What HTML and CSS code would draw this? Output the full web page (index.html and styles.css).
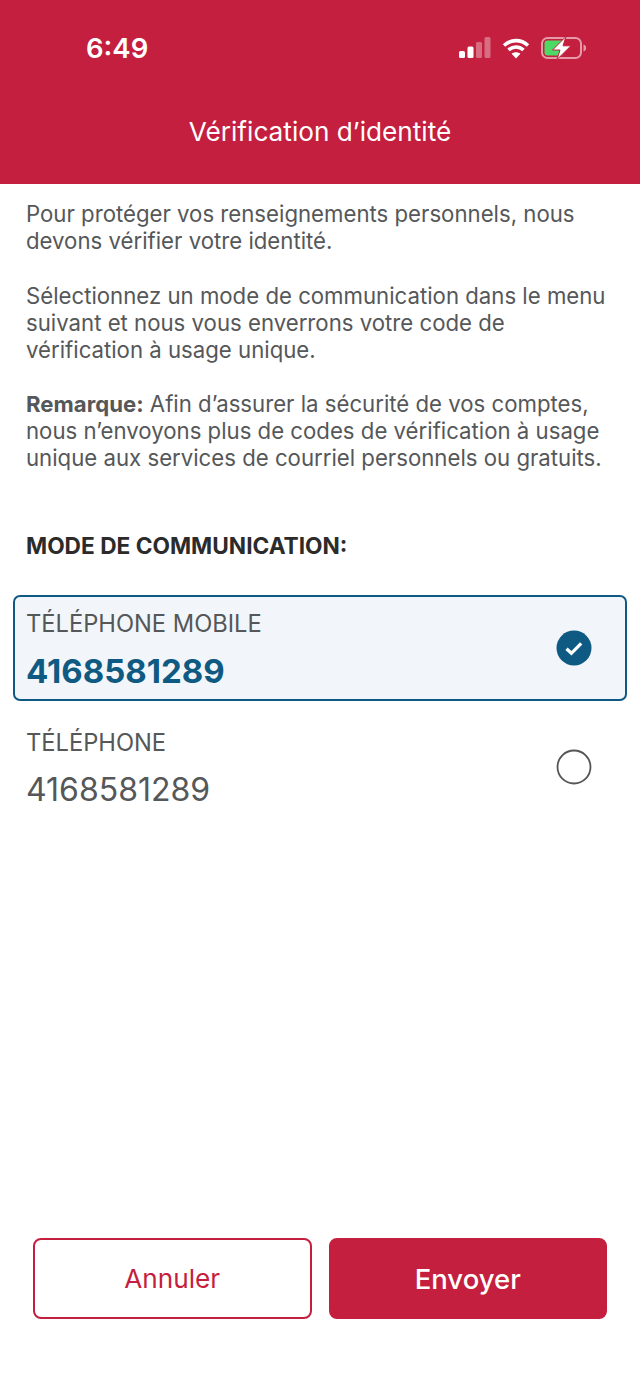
FILE: index.html
```html
<!DOCTYPE html>
<html lang="fr">
<head>
    <meta charset="UTF-8">
    <meta name="viewport" content="width=device-width, initial-scale=1.0">
    <title>Vérification d’identité</title>
    <link rel="stylesheet" href="styles.css">
</head>
<body>
    <div class="screen">
        <header class="top">
            <div class="status">
                <span class="time">6:49</span>
                <div class="status-icons">
                    <svg class="signal" width="32" height="22" viewBox="0 0 32 22">
                        <rect x="0" y="14" width="6" height="7" rx="1.5" fill="#fff"/>
                        <rect x="8.5" y="9.5" width="6" height="11.5" rx="1.5" fill="#fff"/>
                        <rect x="17" y="5" width="6" height="16" rx="1.5" fill="#fff" opacity=".35"/>
                        <rect x="25.5" y="0" width="6" height="21" rx="1.5" fill="#fff" opacity=".35"/>
                    </svg>
                    <svg class="wifi" width="28" height="21" viewBox="0 0 28 21">
                        <path d="M2 7.5C9 1 19 1 26 7.5" fill="none" stroke="#fff" stroke-width="3.6"/>
                        <path d="M6.5 12C11 8 17 8 21.5 12" fill="none" stroke="#fff" stroke-width="3.6"/>
                        <path d="M14 20.5L9.6 15.8C12 13.8 16 13.8 18.4 15.8Z" fill="#fff"/>
                    </svg>
                    <svg class="battery" width="46" height="24" viewBox="0 0 46 24">
                        <rect x="1" y="2" width="39" height="20" rx="5.5" fill="none" stroke="#fff" stroke-opacity=".55" stroke-width="2"/>
                        <rect x="3.5" y="4.5" width="19" height="15" rx="3" fill="#4cd964"/>
                        <path d="M42.5 8.5c2 .6 2.6 2 2.6 3.5s-.6 2.9-2.6 3.5z" fill="#fff" fill-opacity=".55"/>
                        <path d="M25 .5L11.500 14h7.500L16 23.500 30 9.800h-8z" fill="#fff" stroke="#c41f3e"/>
                    </svg>
                </div>
            </div>
            <h1 class="title">Vérification d’identité</h1>
        </header>

        <main class="content">
            <p class="intro">Pour protéger vos renseignements personnels, nous devons vérifier votre identité.</p>
            <p>Sélectionnez un mode de communication dans le menu suivant et nous vous enverrons votre code de vérification à usage unique.</p>
            <p>
                <strong>Remarque:</strong> Afin d’assurer la sécurité de vos comptes, nous n’envoyons plus de codes de vérification à usage unique aux services de courriel personnels ou gratuits.
            </p>
            <h2 class="section-label">MODE DE COMMUNICATION:</h2>
        </main>

        <div class="options">
            <div class="option selected">
                <div>
                    <div class="option-type">TÉLÉPHONE MOBILE</div>
                    <div class="option-number">4168581289</div>
                </div>
                <svg class="radio" width="36" height="36" viewBox="0 0 36 36">
                    <circle cx="18" cy="18" r="17.5" fill="#0f5a82"/>
                    <path d="M10.5 18.800l4.900 4.500 9.800-10" fill="none" stroke="#fff" stroke-width="3.200"/>
                </svg>
            </div>
            <div class="option">
                <div>
                    <div class="option-type">TÉLÉPHONE</div>
                    <div class="option-number">4168581289</div>
                </div>
                <svg class="radio" width="36" height="36" viewBox="0 0 36 36">
                    <circle cx="18" cy="18" r="16.5" fill="none" stroke="#555" stroke-width="1.800"/>
                </svg>
            </div>
        </div>

        <div class="actions">
            <button class="btn btn-cancel" type="button">Annuler</button>
            <button class="btn btn-send" type="button">Envoyer</button>
        </div>
    </div>
</body>
</html>
```

FILE: styles.css
```css
* {
    box-sizing: border-box;
}
body {
    margin: 0;
    font-family: Inter, "Liberation Sans", sans-serif;
    background-color: #fff;
    color: #555759;
}
.screen {
    width: 640px;
    height: 1387px;
    display: flex;
    flex-direction: column;
}
.top {
    height: 184px;
    background-color: #c41f3e;
    color: #fff;
    padding: 32px 53px 0 86px;
}
.status {
    display: flex;
    justify-content: space-between;
    align-items: center;
    height: 32px;
}
.time {
    font-size: 27.5px;
    font-weight: 600;
}
.status-icons {
    display: flex;
    align-items: center;
    gap: 11px;
}
.title {
    margin: 52px 0 0 -86px;
    width: 640px;
    text-align: center;
    font-size: 26.2px;
    line-height: 32px;
    font-weight: 400;
}
.content {
    padding: 16px 26px 0;
    font-size: 22.2px;
    line-height: 27px;
}
.content p {
    margin: 0 0 27px;
}
.content .intro {
    margin-bottom: 28px;
}
.section-label {
    margin: 61px 0 0;
    font-size: 22.7px;
    line-height: 27px;
    font-weight: 700;
    color: #2b2b2b;
}
.options {
    margin: 36px 13px 0;
}
.option {
    height: 106px;
    padding: 15px 33px 0 11px;
    display: flex;
    justify-content: space-between;
    align-items: center;
    border: 2px solid transparent;
    border-radius: 7px;
    margin-bottom: 13px;
}
.option.selected {
    background-color: #f2f6fa;
    border-color: #0f5a82;
}
.option-type {
    font-size: 23.7px;
    line-height: 30px;
    margin-top: -11px;
}
.option-number {
    font-size: 32px;
    line-height: 40px;
    margin-top: 12px;
}
.selected .option-number {
    color: #0f5a82;
    font-size: 33px;
    font-weight: 700;
}
.radio {
    margin-top: -15px;
}
.actions {
    margin-top: auto;
    margin-bottom: 68px;
    padding: 0 33px;
    display: flex;
    gap: 17px;
}
.btn {
    flex: 1;
    height: 81px;
    border-radius: 8px;
    font-family: inherit;
    font-size: 26.2px;
    border: 2px solid #c41f3e;
}
.btn-cancel {
    background-color: #fff;
    color: #c41f3e;
}
.btn-send {
    background-color: #c41f3e;
    color: #fff;
    font-size: 27.5px;
    font-weight: 500;
}
```
